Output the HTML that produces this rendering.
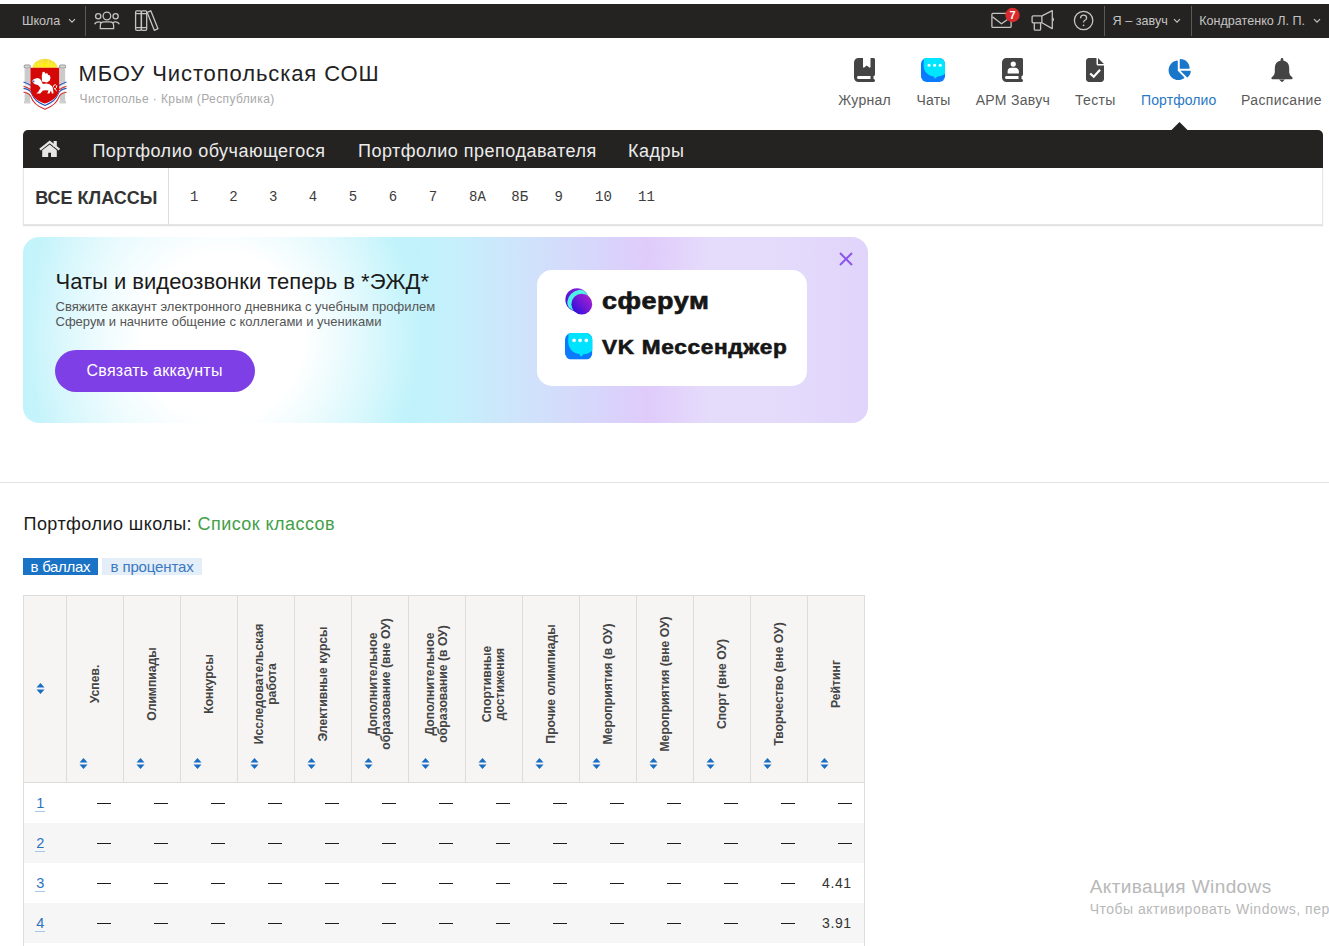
<!DOCTYPE html>
<html><head><meta charset="utf-8">
<style>
*{box-sizing:border-box;margin:0;padding:0}
html,body{width:1329px;height:946px;overflow:hidden;background:#fff;font-family:"Liberation Sans",sans-serif;color:#222;position:relative}
.a{position:absolute;white-space:nowrap;line-height:1}
svg{position:absolute;overflow:visible}
#topbar{position:absolute;left:0;top:4px;width:1329px;height:34px;background:#242321}
.tb{color:#c4c4c4;font-size:12.6px}
.vsep{position:absolute;width:1px;background:#5a5a5a}
.nav{font-size:14px;color:#5a5a5a}
.mi{font-size:18px;color:#ececec;letter-spacing:.5px}
.cl{font-family:"Liberation Mono",monospace;font-size:14px;color:#3c3c3c}
.th{position:absolute;top:596px;height:186px;background:#f6f5f4}
.vl{position:absolute;top:595px;width:1px;height:188px;background:#dcdcdc}
.rot{position:absolute;font-size:12.2px;font-weight:bold;color:#444;line-height:13px;text-align:center;white-space:nowrap;transform:translate(-50%,-50%) rotate(-90deg)}
.row{position:absolute;left:24px;width:840px;height:40px}
.dash{position:absolute;width:14px;height:1.2px;background:#1e1e1e}
.lnk{position:absolute;font-size:14.5px;color:#2a72c0;line-height:1}
.num{position:absolute;font-size:14px;color:#333;line-height:1;letter-spacing:.6px}
</style></head><body>

<!-- TOP BAR -->
<div id="topbar"></div>
<div class="a tb" style="left:21.9px;top:15.1px">Школа</div>
<svg style="left:68px;top:18px" width="8" height="6" viewBox="0 0 8 6"><path d="M1 1.2 L4 4.2 L7 1.2" fill="none" stroke="#c4c4c4" stroke-width="1.2"/></svg>
<div class="vsep" style="left:85px;top:6px;height:30px"></div>
<!-- group icon -->
<svg style="left:0;top:0" width="1329" height="40" viewBox="0 0 1329 40">
 <g fill="none" stroke="#c4c4c4" stroke-width="1.3">
  <circle cx="106.9" cy="16" r="3.8"/>
  <circle cx="98.2" cy="16.2" r="2.6"/>
  <circle cx="115.6" cy="16.2" r="2.6"/>
  <path d="M100.3 28.6 V25.5 Q100.3 21.8 104 21.8 H109.8 Q113.6 21.8 113.6 25.5 V28.6 Z"/>
  <path d="M94.7 24.2 Q95.6 21.9 98.6 21.9 Q100.2 21.9 101.2 22.7"/>
  <path d="M119.2 24.2 Q118.3 21.9 115.3 21.9 Q113.7 21.9 112.7 22.7"/>
 </g>
 <!-- books -->
 <g fill="none" stroke="#c4c4c4" stroke-width="1.3" stroke-linejoin="round">
  <rect x="135.6" y="10.9" width="5.8" height="19.4" rx="1.3"/>
  <rect x="141.4" y="10.9" width="5.3" height="19.4" rx="1.3"/>
  <path d="M135.6 13.6 H146.7 M135.6 27.6 H146.7"/>
  <path d="M147.2 12.4 L150.8 10.8 L158 28.7 L154.3 30.3 Z"/>
 </g>
 <!-- envelope -->
 <g fill="none" stroke="#c4c4c4" stroke-width="1.3" stroke-linejoin="round">
  <rect x="991.9" y="13.4" width="19.2" height="14" rx="1"/>
  <path d="M992.4 16.8 L1001.5 23.8 L1007.5 19.5"/>
 </g>
 <circle cx="1012.5" cy="15" r="7.2" fill="#d92b2b"/>
 <text x="1012.6" y="19" font-family="Liberation Sans" font-weight="bold" font-size="11" fill="#fff" text-anchor="middle">7</text>
 <!-- megaphone -->
 <g fill="none" stroke="#c4c4c4" stroke-width="1.3" stroke-linejoin="round">
  <rect x="1032.1" y="15.8" width="9.8" height="7" rx="1"/>
  <path d="M1041.9 15.8 L1052.3 10.6 V28.6 L1041.9 22.8"/>
  <path d="M1034.3 22.8 V29.2 Q1034.3 30.2 1035.3 30.2 H1039.6 Q1040.6 30.2 1040.6 29.2 V22.8"/>
  <path d="M1052.6 18 Q1054.2 19.5 1052.6 21"/>
 </g>
 <!-- help -->
 <g fill="none" stroke="#c4c4c4" stroke-width="1.3">
  <circle cx="1083.6" cy="20.5" r="9.2"/>
  <path d="M1080.6 18.2 Q1080.6 15.2 1083.6 15.2 Q1086.6 15.2 1086.6 17.9 Q1086.6 19.6 1084.6 20.5 Q1083.6 21 1083.6 22.6"/>
 </g>
 <circle cx="1083.6" cy="25.3" r="0.9" fill="#c4c4c4"/>
</svg>
<div class="vsep" style="left:1104px;top:6px;height:30px"></div>
<div class="a tb" style="left:1112.6px;top:15.1px">Я – завуч</div>
<svg style="left:1173px;top:18px" width="8" height="6" viewBox="0 0 8 6"><path d="M1 1.2 L4 4.2 L7 1.2" fill="none" stroke="#c4c4c4" stroke-width="1.2"/></svg>
<div class="vsep" style="left:1191px;top:6px;height:30px"></div>
<div class="a tb" style="left:1199.2px;top:15.1px">Кондратенко Л. П.</div>
<svg style="left:1313px;top:18px" width="8" height="6" viewBox="0 0 8 6"><path d="M1 1.2 L4 4.2 L7 1.2" fill="none" stroke="#c4c4c4" stroke-width="1.2"/></svg>

<!-- LOGO -->
<svg style="left:20px;top:56px" width="50" height="56" viewBox="0 0 50 56">
 <defs><radialGradient id="sun" cx="0.5" cy="1" r="0.9"><stop offset="0" stop-color="#fff200"/><stop offset="0.35" stop-color="#ffee10"/><stop offset="1" stop-color="#f3dc3a"/></radialGradient></defs>
 <path d="M12.7 11.8 A12.3 9 0 0 1 37.3 11.8 Z" fill="url(#sun)"/>
 <path d="M16 11.5 L14.5 7 M19 11.5 L18 5 M22 11.5 L21.5 3.8 M28 11.5 L28.5 3.8 M31 11.5 L32 5 M34 11.5 L35.5 7" stroke="#fbf08a" stroke-width=".6"/>
 <rect x="4.6" y="12.5" width="5.4" height="34" fill="#cbcbcb"/>
 <rect x="39.8" y="12.5" width="5.4" height="34" fill="#cbcbcb"/>
 <rect x="3.6" y="8.6" width="7.2" height="4" rx="1.8" fill="#9a9a9a"/>
 <rect x="39" y="8.6" width="7.2" height="4" rx="1.8" fill="#9a9a9a"/>
 <rect x="4.5" y="9.6" width="5.4" height="2" rx="1" fill="#d8d8d8"/>
 <rect x="40" y="9.6" width="5.4" height="2" rx="1" fill="#d8d8d8"/>
 <rect x="4" y="45" width="6.6" height="2.5" fill="#d0d0d0"/>
 <rect x="39.4" y="45" width="6.6" height="2.5" fill="#d0d0d0"/>
 <path d="M3.5 26 Q8 27.5 11 29.5 M46.5 26 Q42 27.5 39 29.5" fill="none" stroke="#2456c8" stroke-width="1.1"/>
 <path d="M3.5 28.2 Q8 29.7 11 31.7 M46.5 28.2 Q42 29.7 39 31.7" fill="none" stroke="#fff" stroke-width="1.2"/>
 <path d="M3.5 30.2 Q8 31.7 11 33.7 M46.5 30.2 Q42 31.7 39 33.7" fill="none" stroke="#d62b2b" stroke-width="1.1"/>
 <path d="M3.5 32.4 C8 33 10 34 11 37 C13 43 20 47.5 25 49.5 C30 47.5 37 43 39 37 C40 34 42 33 46.5 32.4" fill="none" stroke="#2456c8" stroke-width="1.1"/>
 <path d="M3.5 34.3 C8 34.9 10 35.9 11 38.9 C13 45 20 49.4 25 51.4 C30 49.4 37 45 39 38.9 C40 35.9 42 34.9 46.5 34.3" fill="none" stroke="#fff" stroke-width="1.4"/>
 <path d="M3.5 36.2 C8 36.8 10 37.8 11 40.8 C13 47 20 51.3 25 53.3 C30 51.3 37 47 39 40.8 C40 37.8 42 36.8 46.5 36.2" fill="none" stroke="#d62b2b" stroke-width="1.1"/>
 <path d="M10.4 11.8 H39.3 V33 C39.3 41 31 45.5 24.9 47.6 C18.8 45.5 10.4 41 10.4 33 Z" fill="#d50808"/>
 <g fill="#fff">
  <path d="M12.3 25 Q13 22.6 15.6 22.5 Q17.5 21.6 19.2 22.4 L21 24 Q22 26 22.8 28 Q26 27 29 28 Q32.5 29.5 33 33 L33.5 37.6 L31.8 37.6 L31 34.5 L29.3 37.6 L27.3 37.6 L28.5 34.5 Q26 34 23 34.5 L20.2 37.6 L16 37.6 L18 36.2 L20.5 32 L18.6 29.5 Q17 28.6 15 28.3 Q13 27.6 12.3 25 Z"/>
  <path d="M22 25.5 L21.8 20 L22.6 16 L24.4 15.8 L25.5 17.7 L27 17 L28.3 19 L29.7 19.2 L30.5 21.6 L29.8 24.5 L27 26.5 Z"/>
 </g>
 <path d="M33 31.5 Q33.5 28.3 35.5 28.8 Q37.5 29.5 36.3 31.8 Q35.6 33 34.3 32.6 L36.8 35" fill="none" stroke="#fff" stroke-width="1"/>
 <circle cx="13.7" cy="25.4" r=".9" fill="#2a6ad8"/>
</svg>
<div class="a" style="left:78.5px;top:63.2px;font-size:22px;color:#222;letter-spacing:.9px">МБОУ Чистопольская СОШ</div>
<div class="a" style="left:79.5px;top:93px;font-size:12px;color:#a8a8a8;letter-spacing:.4px">Чистополье · Крым (Республика)</div>

<!-- NAV ICONS -->
<svg style="left:854px;top:58px" width="21" height="24" viewBox="0 0 448 512"><path fill="#444" fill-rule="evenodd" d="M0 96C0 43 43 0 96 0h96V190.7c0 13.4 15.5 20.9 26 12.5L272 160l54 43.2c10.5 8.4 26 .9 26-12.5V0h32 32c17.7 0 32 14.3 32 32V352c0 17.7-14.3 32-32 32v64c17.7 0 32 14.3 32 32s-14.3 32-32 32H384 96c-53 0-96-43-96-96V96zM64 416c0 17.7 14.3 32 32 32H352V384H96c-17.7 0-32 14.3-32 32z"/></svg>
<svg style="left:921px;top:57.8px" width="24" height="24" viewBox="0 0 24 24">
 <defs><clipPath id="cq"><rect x="0" y="0" width="24" height="24" rx="5.8"/></clipPath></defs>
 <g clip-path="url(#cq)">
  <rect width="24" height="24" fill="#0a7bff"/>
  <path d="M3 -1 H25 V15 C22.5 17.4 19.5 18.5 16.2 18.8 L13.9 20.7 L12.6 18.4 C6.5 17.6 2.6 13 2.6 7.5 Z" fill="#00e6ff"/>
 </g>
 <circle cx="8" cy="7.2" r="1.5" fill="#fff"/><circle cx="13.6" cy="7.2" r="1.5" fill="#fff"/><circle cx="19.2" cy="7.2" r="1.5" fill="#fff"/>
</svg>
<svg style="left:1002px;top:58px" width="21" height="24" viewBox="0 0 448 512">
 <path fill="#444" fill-rule="evenodd" d="M96 0C43 0 0 43 0 96V416c0 53 43 96 96 96H384h32c17.7 0 32-14.3 32-32s-14.3-32-32-32V384c17.7 0 32-14.3 32-32V32c0-17.7-14.3-32-32-32H384 96zm0 384H352v64H96c-17.7 0-32-14.3-32-32s14.3-32 32-32z"/>
 <circle cx="240" cy="130" r="56" fill="#fff"/>
 <path d="M120 328 V290 Q120 210 200 210 H280 Q360 210 360 290 V328 Z" fill="#fff"/>
</svg>
<svg style="left:1086px;top:58px" width="18" height="24" viewBox="0 0 384 512">
 <path fill="#444" d="M0 64C0 28.7 28.7 0 64 0H224V128c0 17.7 14.3 32 32 32H384V448c0 35.3-28.7 64-64 64H64c-35.3 0-64-28.7-64-64V64zm384 64H256V0L384 128z"/>
 <path d="M90 330 L165 400 L300 250" fill="none" stroke="#fff" stroke-width="48"/>
</svg>
<svg style="left:1168px;top:58.7px" width="23.5" height="21" viewBox="32 0 544 512"><path fill="#1a76c9" d="M304 240V16.6c0-9 7-16.6 16-16.6C443.7 0 544 100.3 544 224c0 9-7.6 16-16.6 16H304zM32 272C32 150.7 122.1 50.3 239 34.3c9.2-1.3 17 6.1 17 15.4V288L412.5 444.5c6.7 6.7 6.2 17.7-1.5 23.1C371.8 495.6 323.8 512 272 512C139.5 512 32 404.6 32 272zm526.4 16c9.3 0 16.6 7.8 15.4 17c-7.7 55.9-34.6 105.6-73.9 142.3c-6 5.6-15.4 5.2-21.2-.7L320 288H558.4z"/></svg>
<svg style="left:1270.5px;top:58px" width="22" height="24" viewBox="0 0 22 24">
 <path fill="#444" d="M11 0 Q12.3 0 12.3 1.3 V2.4 Q18.2 3.5 18.2 10 V14.5 Q18.2 17 21.2 19.2 Q22 19.8 21.6 20.6 Q21.3 21.2 20.5 21.2 H1.5 Q0.7 21.2 0.4 20.6 Q0 19.8 0.8 19.2 Q3.8 17 3.8 14.5 V10 Q3.8 3.5 9.7 2.4 V1.3 Q9.7 0 11 0 Z"/>
 <path fill="#444" d="M8 21.6 H14 L11 24.2 Z"/>
</svg>
<div class="a nav" style="left:838.3px;top:93.15px;letter-spacing:.25px">Журнал</div>
<div class="a nav" style="left:916.5px;top:93.15px;letter-spacing:.2px">Чаты</div>
<div class="a nav" style="left:975.7px;top:93.15px;letter-spacing:.3px">АРМ Завуч</div>
<div class="a nav" style="left:1075px;top:93.15px;letter-spacing:.3px">Тесты</div>
<div class="a nav" style="left:1141px;top:93.15px;color:#2a78c4;letter-spacing:.1px">Портфолио</div>
<div class="a nav" style="left:1241px;top:93.15px;letter-spacing:.38px">Расписание</div>

<!-- MENU BAR -->
<svg style="left:1170.5px;top:122px" width="17" height="9" viewBox="0 0 17 9"><path d="M0 8.5 L8.5 0 L17 8.5 Z" fill="#242322"/></svg>
<div style="position:absolute;left:23px;top:130px;width:1300px;height:38px;background:#242322;border-radius:5px 5px 0 0"></div>
<svg style="left:39px;top:141px" width="22" height="17" viewBox="0 0 22 17">
 <rect x="14.6" y="0" width="3.2" height="6" fill="#e6e6e6"/>
 <path d="M1 8.6 L10.7 0.9 L20.4 8.6" fill="none" stroke="#e6e6e6" stroke-width="2.3"/>
 <path d="M3.2 9.2 L10.7 3.4 L17.8 9.2 V15.9 H12 V11.8 H9.2 V15.9 H3.2 Z" fill="#e6e6e6"/>
</svg>
<div class="a mi" style="left:92.4px;top:141.5px">Портфолио обучающегося</div>
<div class="a mi" style="left:358px;top:141.5px">Портфолио преподавателя</div>
<div class="a mi" style="left:628px;top:141.5px">Кадры</div>

<!-- CLASS BAR -->
<div style="position:absolute;left:23px;top:168px;width:1300px;height:57px;background:#fff;border:1px solid #e6e6e6;border-top:none;box-shadow:0 1px 1px rgba(0,0,0,.12)"></div>
<div class="a" style="left:35.3px;top:188.8px;font-size:18px;font-weight:bold;color:#333">ВСЕ КЛАССЫ</div>
<div style="position:absolute;left:168px;top:168px;width:1px;height:57px;background:#dcdcdc"></div>
<div class="a cl" style="left:190px;top:190.3px">1</div>
<div class="a cl" style="left:229.3px;top:190.3px">2</div>
<div class="a cl" style="left:269px;top:190.3px">3</div>
<div class="a cl" style="left:308.7px;top:190.3px">4</div>
<div class="a cl" style="left:348.7px;top:190.3px">5</div>
<div class="a cl" style="left:388.7px;top:190.3px">6</div>
<div class="a cl" style="left:428.7px;top:190.3px">7</div>
<div class="a cl" style="left:469px;top:190.3px">8А</div>
<div class="a cl" style="left:511.3px;top:190.3px">8Б</div>
<div class="a cl" style="left:554.4px;top:190.3px">9</div>
<div class="a cl" style="left:595px;top:190.3px">10</div>
<div class="a cl" style="left:638px;top:190.3px">11</div>

<!-- BANNER -->
<div style="position:absolute;left:23px;top:237px;width:845px;height:186px;border-radius:16px;overflow:hidden;
background:radial-gradient(ellipse 200px 210px at 200px 100px,#ffffff 0%,#ffffff 40%,rgba(255,255,255,0) 100%),linear-gradient(90deg,#c2f3fb 0%,#d4f6fc 12%,#bff3fb 44%,#c4f1fb 50%,#d0e2fb 60%,#d9d2fb 70%,#e0cbfb 74%,#e5dbfb 81%,#e4dbfb 90%,#e1d4fb 100%)"></div>
<div class="a" style="left:55.5px;top:270.9px;font-size:22px;color:#1a1a1a">Чаты и видеозвонки теперь в *ЭЖД*</div>
<div class="a" style="left:55.5px;top:299.6px;font-size:13px;color:#555">Свяжите аккаунт электронного дневника с учебным профилем</div>
<div class="a" style="left:55.5px;top:315.2px;font-size:13px;color:#555">Сферум и начните общение с коллегами и учениками</div>
<div style="position:absolute;left:55px;top:350px;width:200px;height:42px;border-radius:21px;background:#7f3fe6"></div>
<div class="a" style="left:86.5px;top:362.5px;font-size:16px;color:#fff;letter-spacing:.25px">Связать аккаунты</div>
<svg style="left:839px;top:252px" width="14" height="14" viewBox="0 0 14 14"><path d="M1 1 L13 13 M13 1 L1 13" stroke="#8b55ec" stroke-width="2"/></svg>
<div style="position:absolute;left:537px;top:270px;width:270px;height:116px;border-radius:15px;background:#fff"></div>
<svg style="left:564.6px;top:288px" width="27.4" height="27" viewBox="0 0 27.4 27">
 <defs>
  <linearGradient id="sg" x1="0.1" y1="0.9" x2="0.9" y2="0.2"><stop offset="0" stop-color="#2a10d8"/><stop offset="0.5" stop-color="#6a18d8"/><stop offset="1" stop-color="#a020d2"/></linearGradient>
  <linearGradient id="sg2" x1="0" y1="1" x2="0.8" y2="0"><stop offset="0" stop-color="#3010d8"/><stop offset="1" stop-color="#8f1ed8"/></linearGradient>
 </defs>
 <circle cx="11.95" cy="11.8" r="11.6" fill="url(#sg2)"/>
 <ellipse cx="12.5" cy="12" rx="11.3" ry="8.9" transform="rotate(-45 12.5 12)" fill="#4ff0e6"/>
 <circle cx="16.8" cy="16.2" r="10.4" fill="url(#sg)"/>
</svg>
<div class="a" style="left:601.6px;top:289.3px;font-size:24px;font-weight:bold;color:#161616;letter-spacing:.6px;-webkit-text-stroke:.7px #161616;transform:scaleX(1.12);transform-origin:0 0">сферум</div>
<svg style="left:564.6px;top:333px" width="27.4" height="26.6" viewBox="0 0 27.4 26.6">
 <defs><clipPath id="vc"><rect width="27.4" height="26.6" rx="6.5"/></clipPath></defs>
 <g clip-path="url(#vc)">
  <rect width="27.4" height="26.6" fill="#0b7afc"/>
  <path d="M3.6 -1 H28 V17 C25.5 19.8 22 21 18.5 21.3 L16 23.7 L14.4 21.1 C7.5 20.2 3.2 15 3.2 8.5 Z" fill="#00e3ff"/>
 </g>
 <circle cx="9.1" cy="7.4" r="1.8" fill="#fff"/><circle cx="15.1" cy="7.4" r="1.8" fill="#fff"/><circle cx="21.3" cy="7.4" r="1.8" fill="#fff"/>
</svg>
<div class="a" style="left:602px;top:337.1px;font-size:20px;font-weight:bold;color:#161616;letter-spacing:.6px;-webkit-text-stroke:.6px #161616;transform:scaleX(1.13);transform-origin:0 0">VK Мессенджер</div>

<div style="position:absolute;left:0;top:482px;width:1329px;height:1px;background:#e2e2e2"></div>

<!-- PORTFOLIO TITLE -->
<div class="a" style="left:23.5px;top:514.7px;font-size:18px;color:#1a1a1a;letter-spacing:.45px">Портфолио школы: <span style="color:#43a047">Список классов</span></div>
<div style="position:absolute;left:23px;top:558px;width:75px;height:17px;background:#1a73c4"></div>
<div class="a" style="left:30.6px;top:558.6px;font-size:15px;color:#fff;letter-spacing:-.3px">в баллах</div>
<div style="position:absolute;left:102px;top:558px;width:100px;height:17px;background:#e3eef9"></div>
<div class="a" style="left:110.6px;top:558.6px;font-size:15px;color:#3a78c0;letter-spacing:-.15px">в процентах</div>

<!-- TABLE -->
<div id="tbl">
<div class="th" style="left:24px;width:840px"></div>
<div style="position:absolute;left:23px;top:595px;width:842px;height:1px;background:#dcdcdc"></div>
<div style="position:absolute;left:23px;top:782px;width:842px;height:1px;background:#dcdcdc"></div>
<div class="row" style="top:783px;background:#fff"></div>
<div class="row" style="top:823px;background:#f6f6f6"></div>
<div class="row" style="top:863px;background:#fff"></div>
<div class="row" style="top:903px;background:#f6f6f6"></div>
<div class="row" style="top:943px;background:#fff"></div>
<div style="position:absolute;left:23px;top:595px;width:1px;height:351px;background:#dcdcdc"></div>
<div style="position:absolute;left:864px;top:595px;width:1px;height:351px;background:#dcdcdc"></div>
<div class="vl" style="left:66px"></div>
<div class="vl" style="left:123px"></div>
<div class="vl" style="left:180px"></div>
<div class="vl" style="left:237px"></div>
<div class="vl" style="left:294px"></div>
<div class="vl" style="left:351px"></div>
<div class="vl" style="left:408px"></div>
<div class="vl" style="left:465px"></div>
<div class="vl" style="left:522px"></div>
<div class="vl" style="left:579px"></div>
<div class="vl" style="left:636px"></div>
<div class="vl" style="left:693px"></div>
<div class="vl" style="left:750px"></div>
<div class="vl" style="left:807px"></div>
<svg style="left:36px;top:683.2px" width="9" height="11" viewBox="0 0 9 11"><path d="M4.5 0 L8.5 4.5 H0.5 Z M0.5 6.5 H8.5 L4.5 11 Z" fill="#1a6fc4"/></svg>
<div class="rot" style="left:95.0px;top:683.5px">Успев.</div>
<svg style="left:79.2px;top:758px" width="9" height="11" viewBox="0 0 9 11"><path d="M4.5 0 L8.5 4.5 H0.5 Z M0.5 6.5 H8.5 L4.5 11 Z" fill="#1a6fc4"/></svg>
<div class="rot" style="left:152.0px;top:683.5px">Олимпиады</div>
<svg style="left:136.2px;top:758px" width="9" height="11" viewBox="0 0 9 11"><path d="M4.5 0 L8.5 4.5 H0.5 Z M0.5 6.5 H8.5 L4.5 11 Z" fill="#1a6fc4"/></svg>
<div class="rot" style="left:209.0px;top:683.5px">Конкурсы</div>
<svg style="left:193.2px;top:758px" width="9" height="11" viewBox="0 0 9 11"><path d="M4.5 0 L8.5 4.5 H0.5 Z M0.5 6.5 H8.5 L4.5 11 Z" fill="#1a6fc4"/></svg>
<div class="rot" style="left:266.0px;top:683.5px">Исследовательская<br>работа</div>
<svg style="left:250.2px;top:758px" width="9" height="11" viewBox="0 0 9 11"><path d="M4.5 0 L8.5 4.5 H0.5 Z M0.5 6.5 H8.5 L4.5 11 Z" fill="#1a6fc4"/></svg>
<div class="rot" style="left:323.0px;top:683.5px">Элективные курсы</div>
<svg style="left:307.2px;top:758px" width="9" height="11" viewBox="0 0 9 11"><path d="M4.5 0 L8.5 4.5 H0.5 Z M0.5 6.5 H8.5 L4.5 11 Z" fill="#1a6fc4"/></svg>
<div class="rot" style="left:380.0px;top:683.5px">Дополнительное<br>образование (вне ОУ)</div>
<svg style="left:364.2px;top:758px" width="9" height="11" viewBox="0 0 9 11"><path d="M4.5 0 L8.5 4.5 H0.5 Z M0.5 6.5 H8.5 L4.5 11 Z" fill="#1a6fc4"/></svg>
<div class="rot" style="left:437.0px;top:683.5px">Дополнительное<br>образование (в ОУ)</div>
<svg style="left:421.2px;top:758px" width="9" height="11" viewBox="0 0 9 11"><path d="M4.5 0 L8.5 4.5 H0.5 Z M0.5 6.5 H8.5 L4.5 11 Z" fill="#1a6fc4"/></svg>
<div class="rot" style="left:494.0px;top:683.5px">Спортивные<br>достижения</div>
<svg style="left:478.2px;top:758px" width="9" height="11" viewBox="0 0 9 11"><path d="M4.5 0 L8.5 4.5 H0.5 Z M0.5 6.5 H8.5 L4.5 11 Z" fill="#1a6fc4"/></svg>
<div class="rot" style="left:551.0px;top:683.5px">Прочие олимпиады</div>
<svg style="left:535.2px;top:758px" width="9" height="11" viewBox="0 0 9 11"><path d="M4.5 0 L8.5 4.5 H0.5 Z M0.5 6.5 H8.5 L4.5 11 Z" fill="#1a6fc4"/></svg>
<div class="rot" style="left:608.0px;top:683.5px">Мероприятия (в ОУ)</div>
<svg style="left:592.2px;top:758px" width="9" height="11" viewBox="0 0 9 11"><path d="M4.5 0 L8.5 4.5 H0.5 Z M0.5 6.5 H8.5 L4.5 11 Z" fill="#1a6fc4"/></svg>
<div class="rot" style="left:665.0px;top:683.5px">Мероприятия (вне ОУ)</div>
<svg style="left:649.2px;top:758px" width="9" height="11" viewBox="0 0 9 11"><path d="M4.5 0 L8.5 4.5 H0.5 Z M0.5 6.5 H8.5 L4.5 11 Z" fill="#1a6fc4"/></svg>
<div class="rot" style="left:722.0px;top:683.5px">Спорт (вне ОУ)</div>
<svg style="left:706.2px;top:758px" width="9" height="11" viewBox="0 0 9 11"><path d="M4.5 0 L8.5 4.5 H0.5 Z M0.5 6.5 H8.5 L4.5 11 Z" fill="#1a6fc4"/></svg>
<div class="rot" style="left:779.0px;top:683.5px">Творчество (вне ОУ)</div>
<svg style="left:763.2px;top:758px" width="9" height="11" viewBox="0 0 9 11"><path d="M4.5 0 L8.5 4.5 H0.5 Z M0.5 6.5 H8.5 L4.5 11 Z" fill="#1a6fc4"/></svg>
<div class="rot" style="left:836.0px;top:683.5px">Рейтинг</div>
<svg style="left:820.2px;top:758px" width="9" height="11" viewBox="0 0 9 11"><path d="M4.5 0 L8.5 4.5 H0.5 Z M0.5 6.5 H8.5 L4.5 11 Z" fill="#1a6fc4"/></svg>
<div class="lnk" style="left:36.2px;top:795.5px">1</div>
<div style="position:absolute;left:35.4px;top:810.8px;width:9.2px;height:1px;background:#a9c7e8"></div>
<div class="dash" style="left:96.5px;top:803px"></div>
<div class="dash" style="left:153.5px;top:803px"></div>
<div class="dash" style="left:210.5px;top:803px"></div>
<div class="dash" style="left:267.5px;top:803px"></div>
<div class="dash" style="left:324.5px;top:803px"></div>
<div class="dash" style="left:381.5px;top:803px"></div>
<div class="dash" style="left:438.5px;top:803px"></div>
<div class="dash" style="left:495.5px;top:803px"></div>
<div class="dash" style="left:552.5px;top:803px"></div>
<div class="dash" style="left:609.5px;top:803px"></div>
<div class="dash" style="left:666.5px;top:803px"></div>
<div class="dash" style="left:723.5px;top:803px"></div>
<div class="dash" style="left:780.5px;top:803px"></div>
<div class="dash" style="left:837.5px;top:803px"></div>
<div class="lnk" style="left:36.2px;top:835.5px">2</div>
<div style="position:absolute;left:35.4px;top:850.8px;width:9.2px;height:1px;background:#a9c7e8"></div>
<div class="dash" style="left:96.5px;top:843px"></div>
<div class="dash" style="left:153.5px;top:843px"></div>
<div class="dash" style="left:210.5px;top:843px"></div>
<div class="dash" style="left:267.5px;top:843px"></div>
<div class="dash" style="left:324.5px;top:843px"></div>
<div class="dash" style="left:381.5px;top:843px"></div>
<div class="dash" style="left:438.5px;top:843px"></div>
<div class="dash" style="left:495.5px;top:843px"></div>
<div class="dash" style="left:552.5px;top:843px"></div>
<div class="dash" style="left:609.5px;top:843px"></div>
<div class="dash" style="left:666.5px;top:843px"></div>
<div class="dash" style="left:723.5px;top:843px"></div>
<div class="dash" style="left:780.5px;top:843px"></div>
<div class="dash" style="left:837.5px;top:843px"></div>
<div class="lnk" style="left:36.2px;top:875.5px">3</div>
<div style="position:absolute;left:35.4px;top:890.8px;width:9.2px;height:1px;background:#a9c7e8"></div>
<div class="dash" style="left:96.5px;top:883px"></div>
<div class="dash" style="left:153.5px;top:883px"></div>
<div class="dash" style="left:210.5px;top:883px"></div>
<div class="dash" style="left:267.5px;top:883px"></div>
<div class="dash" style="left:324.5px;top:883px"></div>
<div class="dash" style="left:381.5px;top:883px"></div>
<div class="dash" style="left:438.5px;top:883px"></div>
<div class="dash" style="left:495.5px;top:883px"></div>
<div class="dash" style="left:552.5px;top:883px"></div>
<div class="dash" style="left:609.5px;top:883px"></div>
<div class="dash" style="left:666.5px;top:883px"></div>
<div class="dash" style="left:723.5px;top:883px"></div>
<div class="dash" style="left:780.5px;top:883px"></div>
<div class="num" style="left:822.0px;top:876.4px">4.41</div>
<div class="lnk" style="left:36.2px;top:915.5px">4</div>
<div style="position:absolute;left:35.4px;top:930.8px;width:9.2px;height:1px;background:#a9c7e8"></div>
<div class="dash" style="left:96.5px;top:923px"></div>
<div class="dash" style="left:153.5px;top:923px"></div>
<div class="dash" style="left:210.5px;top:923px"></div>
<div class="dash" style="left:267.5px;top:923px"></div>
<div class="dash" style="left:324.5px;top:923px"></div>
<div class="dash" style="left:381.5px;top:923px"></div>
<div class="dash" style="left:438.5px;top:923px"></div>
<div class="dash" style="left:495.5px;top:923px"></div>
<div class="dash" style="left:552.5px;top:923px"></div>
<div class="dash" style="left:609.5px;top:923px"></div>
<div class="dash" style="left:666.5px;top:923px"></div>
<div class="dash" style="left:723.5px;top:923px"></div>
<div class="dash" style="left:780.5px;top:923px"></div>
<div class="num" style="left:822.0px;top:916.4px">3.91</div>
</div><!--/tbl-->
<div class="a" style="left:1089.7px;top:876.8px;font-size:19px;color:#b8b8b8;letter-spacing:.4px">Активация Windows</div>
<div class="a" style="left:1089.7px;top:902.2px;font-size:14px;color:#b8b8b8;letter-spacing:.5px">Чтобы активировать Windows, перейдите</div>
</body></html>
